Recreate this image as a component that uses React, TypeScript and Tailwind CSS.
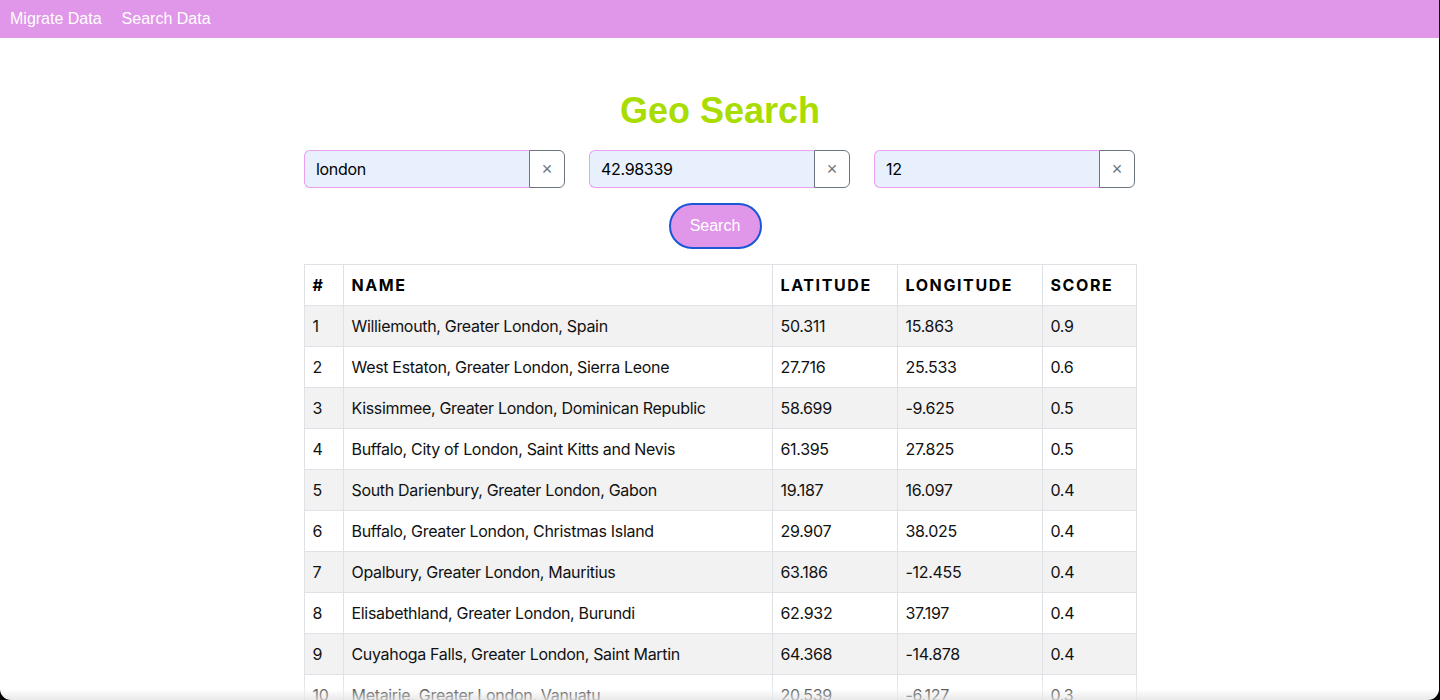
import React from "react";

const rows = [
  ["1", "Williemouth, Greater London, Spain", "50.311", "15.863", "0.9"],
  ["2", "West Estaton, Greater London, Sierra Leone", "27.716", "25.533", "0.6"],
  ["3", "Kissimmee, Greater London, Dominican Republic", "58.699", "-9.625", "0.5"],
  ["4", "Buffalo, City of London, Saint Kitts and Nevis", "61.395", "27.825", "0.5"],
  ["5", "South Darienbury, Greater London, Gabon", "19.187", "16.097", "0.4"],
  ["6", "Buffalo, Greater London, Christmas Island", "29.907", "38.025", "0.4"],
  ["7", "Opalbury, Greater London, Mauritius", "63.186", "-12.455", "0.4"],
  ["8", "Elisabethland, Greater London, Burundi", "62.932", "37.197", "0.4"],
  ["9", "Cuyahoga Falls, Greater London, Saint Martin", "64.368", "-14.878", "0.4"],
  ["10", "Metairie, Greater London, Vanuatu", "20.539", "-6.127", "0.3"],
];

function Field({ value }: { value: string }) {
  return (
    <div className="flex h-[38px] w-[261px]">
      <div className="flex flex-1 items-center rounded-l-[6px] border border-r-0 border-[#eb9ff0] bg-[#e8f0fe] pl-[11px] text-[16px] tracking-[-0.02em] text-black [font-family:Inter,sans-serif]">
        {value}
      </div>
      <button className="flex w-[36px] items-center justify-center rounded-r-[6px] border border-[#6c757d] bg-white text-[18px] text-[#6c757d] [font-family:'Liberation_Sans',sans-serif]">
        ×
      </button>
    </div>
  );
}

export default function App() {
  return (
    <div className="relative min-h-[700px] bg-white">
      <nav className="flex h-[38px] items-center gap-[20px] bg-[#e097e9] px-[10px] text-[16px] text-white [font-family:'Liberation_Sans',Arial,sans-serif]">
        <span>Migrate Data</span>
        <span>Search Data</span>
      </nav>
      <main className="mx-auto flex w-[832px] flex-col items-center">
        <h1 className="mt-[53px] text-[36px] font-bold leading-[40px] text-[#a9dc00] [font-family:'Liberation_Sans',Arial,sans-serif]">
          Geo Search
        </h1>
        <div className="mt-[19px] flex w-full gap-[24px]">
          <Field value="london" />
          <Field value="42.98339" />
          <Field value="12" />
        </div>
        <button className="mt-[15px] mr-[10px] h-[46px] w-[93px] rounded-full border-2 border-[#1a56d6] bg-[#e097e9] text-[16px] text-white [font-family:'Liberation_Sans',Arial,sans-serif]">
          Search
        </button>
        <table className="mt-[15px] w-[832px] table-fixed border-collapse text-[16px] leading-6 text-[#111] [font-family:Inter,sans-serif]">
          <colgroup>
            <col className="w-[39px]" />
            <col className="w-[429px]" />
            <col className="w-[125px]" />
            <col className="w-[145px]" />
            <col className="w-[94px]" />
          </colgroup>
          <thead>
            <tr>
              {["#", "Name", "Latitude", "Longitude", "Score"].map((h) => (
                <th
                  key={h}
                  className="border border-[#dee2e6] px-2 py-2 text-left font-bold uppercase tracking-[0.1em] text-black"
                >
                  {h}
                </th>
              ))}
            </tr>
          </thead>
          <tbody>
            {rows.map((r, i) => (
              <tr key={r[0]} className={i % 2 === 0 ? "bg-[#f2f2f2]" : "bg-white"}>
                {r.map((c, j) => (
                  <td key={j} className="whitespace-nowrap border border-[#dee2e6] px-2 py-2 tracking-[-0.02em]">
                    {c}
                  </td>
                ))}
              </tr>
            ))}
          </tbody>
        </table>
      </main>
      <div className="pointer-events-none fixed inset-0 overflow-hidden">
        <div className="absolute inset-x-0 bottom-0 h-[22px] bg-gradient-to-b from-white/0 via-white/30 to-[#e4e4e4]/80" />
        <div className="absolute top-0 bottom-0 left-0 right-[1px] rounded-b-[11px] shadow-[0_0_0_40px_#000]" />
      </div>
    </div>
  );
}
